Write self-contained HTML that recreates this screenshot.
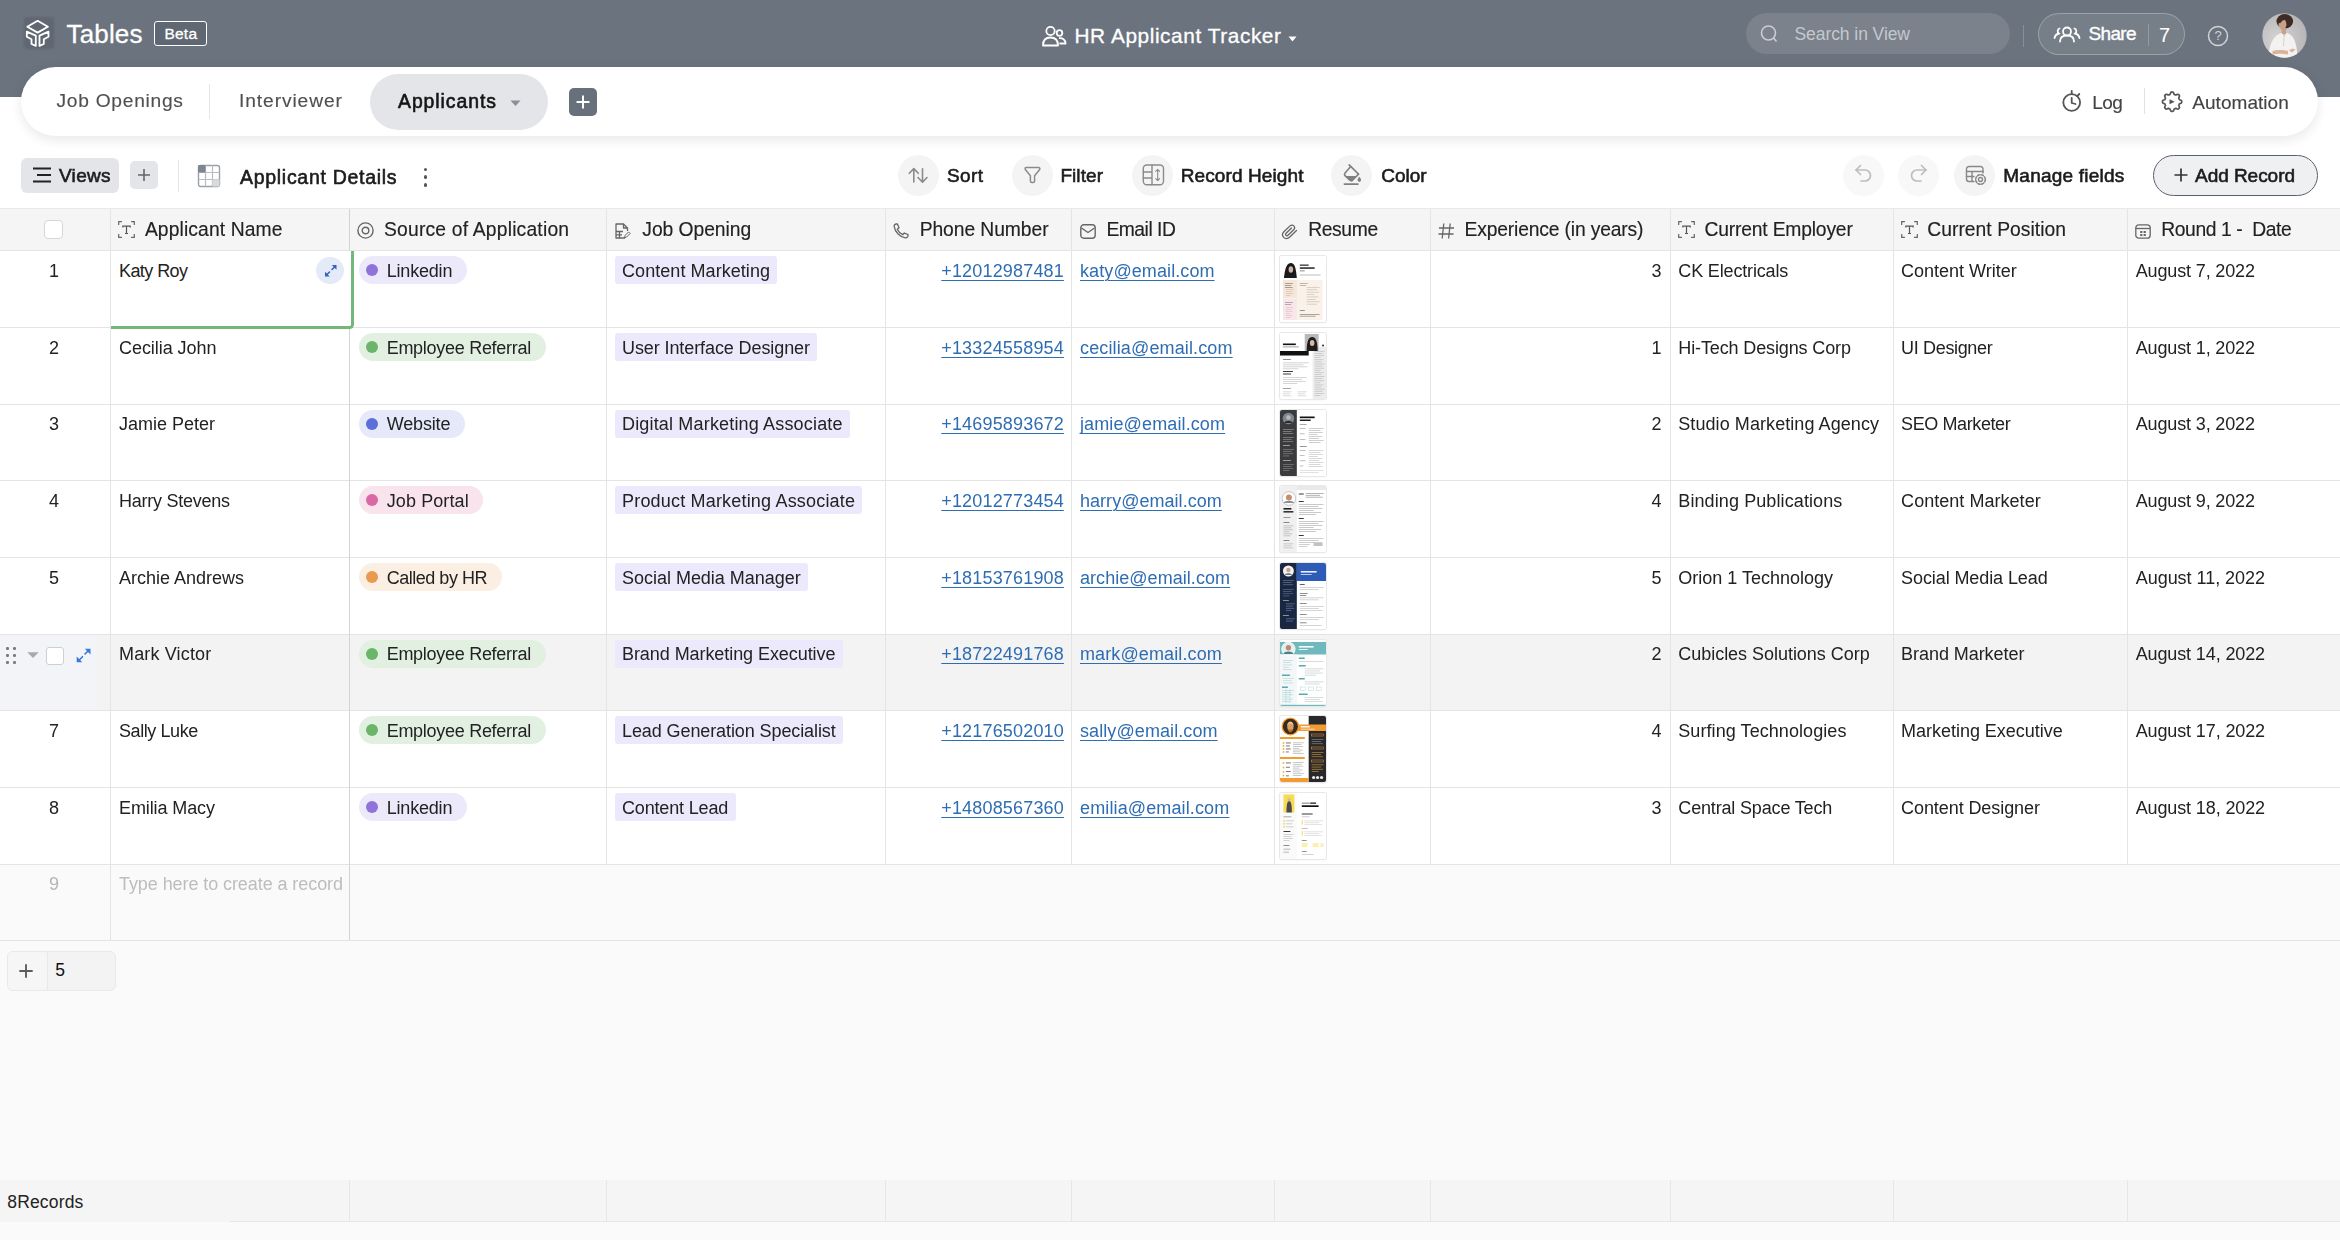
<!DOCTYPE html>
<html lang="en"><head><meta charset="utf-8"><title>HR Applicant Tracker - Tables</title>
<style>
html,body{margin:0;padding:0;}
body{width:2340px;height:1240px;overflow:hidden;position:relative;background:#fff;font-family:"Liberation Sans",sans-serif;}
.b{position:absolute;box-sizing:border-box;}
.t{position:absolute;white-space:pre;}
#root{position:absolute;left:0;top:0;width:2340px;height:1240px;opacity:0.999;}
</style></head><body><div id="root">
<div class="b" style="left:0px;top:0px;width:2340px;height:97px;background:#6b737e;"></div>
<div class="b" style="left:21px;top:67px;width:2297px;height:69px;background:#fff;border-radius:35px;box-shadow:0 4px 14px rgba(0,0,0,0.10);"></div>
<div class="b" style="left:24px;top:16.5px;width:29.5px;height:32px;background:#5f6773;border-radius:4px;filter:blur(1.2px);"></div>
<svg class="b" style="left:22px;top:16px;" width="34" height="34" viewBox="0 0 34 34" fill="none"><g stroke="#fff" stroke-width="1.800" stroke-linejoin="round"><path d="M15.600 4.800 L25.900 10.700 L15.600 16.600 L5.300 10.700 Z"/><path d="M4.800 15.600 L4.800 20.800 L9.500 23.200 L9.500 28 L13.800 29.900 L13.800 19.600 Z"/><path d="M26.500 15.600 L26.500 20.800 L21.800 23.200 L21.800 28 L17.500 29.900 L17.500 19.600 Z"/></g></svg>
<span class="t" style="top:20.99px;font-size:26px;line-height:26px;color:#fff;letter-spacing:0.169px;left:66.50px;-webkit-text-stroke:0.3px #fff;">Tables</span>
<div class="b" style="left:154px;top:21px;width:53px;height:25px;border-radius:3px;border:1.5px solid #fff;background:#5f6773;"></div>
<span class="t" style="top:25.88px;font-size:15.5px;line-height:15.5px;color:#fff;letter-spacing:0.205px;left:164.50px;-webkit-text-stroke:0.3px #fff;">Beta</span>
<svg class="b" style="left:1042px;top:25px;" width="25" height="22" viewBox="0 0 25 22" fill="none"><g stroke="#fff" stroke-width="1.8"><circle cx="8.5" cy="6" r="4.2"/><path d="M1 20.5 C1 15 4 12.5 8.5 12.5 C13 12.5 16 15 16 20.5 Z" stroke-linejoin="round"/><circle cx="17.5" cy="8" r="2.8"/><path d="M17 13.2 C20.5 12.8 23.5 14.5 23.5 18.5 L17.5 18.5"/></g></svg>
<span class="t" style="top:26.19px;font-size:20.8px;line-height:20.8px;color:#fff;letter-spacing:0.585px;left:1074.50px;-webkit-text-stroke:0.3px #fff;">HR Applicant Tracker</span>
<svg class="b" style="left:1288px;top:36px;" width="9" height="6" viewBox="0 0 9 6" fill="none"><path d="M0.5 0.5 L8.5 0.5 L4.5 5.5 Z" fill="#fff"/></svg>
<div class="b" style="left:1746px;top:13px;width:264px;height:41px;background:rgba(255,255,255,0.11);border-radius:21px;"></div>
<svg class="b" style="left:1760px;top:25px;" width="18" height="18" viewBox="0 0 18 18" fill="none"><g stroke="#c9ced4" stroke-width="1.6"><circle cx="8.5" cy="8" r="7"/><path d="M13.5 13 L16.5 16.5"/></g></svg>
<span class="t" style="top:25.69px;font-size:17.5px;line-height:17.5px;color:#c3c8ce;letter-spacing:-0.070px;left:1794.50px;">Search in View</span>
<div class="b" style="left:2023px;top:25px;width:1px;height:22px;background:rgba(255,255,255,0.2);"></div>
<div class="b" style="left:2038px;top:13px;width:147px;height:42px;background:rgba(255,255,255,0.08);border-radius:21px;border:1px solid rgba(255,255,255,0.28);"></div>
<svg class="b" style="left:2053px;top:24px;" width="28" height="20" viewBox="0 0 28 20" fill="none"><g stroke="#fff" stroke-width="1.8" stroke-linecap="round"><circle cx="14" cy="7.5" r="4"/><path d="M7 17.5 C7 13 10 11.5 14 11.5 C18 11.5 21 13 21 17.5"/><path d="M6.5 4.5 C4.5 5 4 8 5.8 9.5 C3.5 10 2 11.5 1.5 14"/><path d="M21.5 4.5 C23.5 5 24 8 22.2 9.5 C24.5 10 26 11.5 26.5 14"/></g></svg>
<span class="t" style="top:24.42px;font-size:19px;line-height:19px;color:#fff;letter-spacing:-0.675px;left:2088.50px;-webkit-text-stroke:0.35px #fff;">Share</span>
<div class="b" style="left:2148px;top:24px;width:1px;height:22px;background:rgba(255,255,255,0.22);"></div>
<span class="t" style="top:24.57px;font-size:20px;line-height:20px;color:#fff;letter-spacing:0.000px;left:2159.00px;">7</span>
<svg class="b" style="left:2207px;top:25px;" width="22" height="22" viewBox="0 0 22 22" fill="none"><circle cx="11" cy="11" r="9.5" stroke="#cfd3d8" stroke-width="1.5"/></svg>
<span class="t" style="top:29.20px;font-size:13px;line-height:13px;color:#cfd3d8;letter-spacing:0.000px;left:2214.40px;">?</span>
<svg class="b" style="left:2262px;top:12.5px;filter:blur(0.5px)" width="45" height="45" viewBox="0 0 45 45"><defs><clipPath id="av"><circle cx="22.5" cy="22.5" r="22.2"/></clipPath><radialGradient id="avg" cx="0.35" cy="0.6" r="0.75"><stop offset="0" stop-color="#d6d5d5"/><stop offset="1" stop-color="#b3b1b1"/></radialGradient></defs><g clip-path="url(#av)"><rect width="45" height="45" fill="url(#avg)"/><ellipse cx="22.800" cy="8.300" rx="8.300" ry="7.300" fill="#3d2b24"/><ellipse cx="20.500" cy="11.300" rx="3.900" ry="5.200" fill="#c9a18b"/><path d="M15.500 8.500 C17 3.500 24 2.500 27.500 5.500 C24 6 20 7 18.500 10 C17.500 10.500 16.500 10 15.500 8.500 Z" fill="#3d2b24"/><rect x="19.500" y="15" width="4.500" height="6" fill="#c9a18b"/><path d="M6.500 45 C7 29 13 21.500 20 20 L22 24.500 L24.500 20 C31 21.500 35 28 35.500 45 Z" fill="#f4f2f1"/><path d="M21.900 24.500 L21.500 33" stroke="#cfc8c4" stroke-width="0.800"/><path d="M10.500 38 C15 36.500 22 36.800 26 38 L26 41.500 C21 40.500 15 40.500 10.500 41.500 Z" fill="#d9b39c"/><path d="M27 37.500 C29 35.500 32 35.500 33.500 36.500 L30 39.500 Z" fill="#d9b39c"/></g></svg>
<span class="t" style="top:90.75px;font-size:19.2px;line-height:19.2px;color:#505050;letter-spacing:0.729px;left:56.50px;-webkit-text-stroke:0.15px #505050;">Job Openings</span>
<div class="b" style="left:208.5px;top:84px;width:1px;height:35px;background:#e6e6e6;"></div>
<span class="t" style="top:90.75px;font-size:19.2px;line-height:19.2px;color:#505050;letter-spacing:0.910px;left:239.00px;-webkit-text-stroke:0.15px #505050;">Interviewer</span>
<div class="b" style="left:370px;top:74px;width:178px;height:56px;background:#e3e5e9;border-radius:28px;"></div>
<span class="t" style="top:92.08px;font-size:19.4px;line-height:19.4px;color:#151515;letter-spacing:0.944px;left:398.00px;-webkit-text-stroke:0.6px #151515;">Applicants</span>
<svg class="b" style="left:510px;top:100px;" width="12" height="7" viewBox="0 0 12 7" fill="none"><path d="M0.5 0.5 L10.5 0.5 L5.5 6 Z" fill="#8a8f97"/></svg>
<div class="b" style="left:569px;top:88px;width:28px;height:28px;background:#68707c;border-radius:5px;"></div>
<svg class="b" style="left:575px;top:94px;" width="16" height="16" viewBox="0 0 16 16" fill="none"><path d="M8 1.5 V14.5 M1.5 8 H14.5" stroke="#fff" stroke-width="2"/></svg>
<svg class="b" style="left:2061px;top:89px;" width="22" height="24" viewBox="0 0 22 24" fill="none"><g stroke="#555" stroke-width="1.800" stroke-linecap="round" stroke-linejoin="round"><circle cx="10.700" cy="13.500" r="8.400"/><path d="M10.700 9 V14 L14.500 15"/><path d="M10.700 1.800 V4.800 M18.300 5 L16.800 6.500"/></g></svg>
<span class="t" style="top:92.72px;font-size:19px;line-height:19px;color:#444;letter-spacing:-0.601px;left:2092.30px;-webkit-text-stroke:0.15px #444;">Log</span>
<div class="b" style="left:2144px;top:88px;width:1px;height:26px;background:#e2e2e2;"></div>
<svg class="b" style="left:2161px;top:90px;" width="22" height="24" viewBox="0 0 22 24" fill="none"><g stroke="#555" stroke-width="1.700" stroke-linejoin="round"><path d="M11.10 2.10 L11.73 2.12 L12.33 2.39 L12.77 3.31 L13.10 4.25 L13.51 4.60 L13.97 4.77 L14.42 4.97 L14.95 5.02 L15.85 4.59 L16.82 4.25 L17.43 4.48 L17.89 4.91 L18.32 5.37 L18.55 5.98 L18.21 6.95 L17.78 7.84 L17.83 8.38 L18.03 8.83 L18.20 9.29 L18.55 9.70 L19.49 10.03 L20.41 10.47 L20.68 11.07 L20.70 11.70 L20.68 12.33 L20.41 12.93 L19.49 13.37 L18.55 13.70 L18.20 14.11 L18.03 14.57 L17.83 15.02 L17.78 15.55 L18.21 16.45 L18.55 17.42 L18.32 18.03 L17.89 18.49 L17.43 18.92 L16.82 19.15 L15.85 18.81 L14.95 18.38 L14.42 18.43 L13.97 18.63 L13.51 18.80 L13.10 19.15 L12.77 20.09 L12.33 21.01 L11.73 21.28 L11.10 21.30 L10.47 21.28 L9.87 21.01 L9.43 20.09 L9.10 19.15 L8.69 18.80 L8.23 18.63 L7.78 18.43 L7.25 18.38 L6.35 18.81 L5.38 19.15 L4.77 18.92 L4.31 18.49 L3.88 18.03 L3.65 17.42 L3.99 16.45 L4.42 15.56 L4.37 15.02 L4.17 14.57 L4.00 14.11 L3.65 13.70 L2.71 13.37 L1.79 12.93 L1.52 12.33 L1.50 11.70 L1.52 11.07 L1.79 10.47 L2.71 10.03 L3.65 9.70 L4.00 9.29 L4.17 8.83 L4.37 8.38 L4.42 7.84 L3.99 6.95 L3.65 5.98 L3.88 5.37 L4.31 4.91 L4.77 4.48 L5.38 4.25 L6.35 4.59 L7.24 5.02 L7.78 4.97 L8.23 4.77 L8.69 4.60 L9.10 4.25 L9.43 3.31 L9.87 2.39 L10.47 2.12 Z"/></g><path d="M8.500 9.200 L13.700 11.700 L8.500 14.200 Z" fill="#555"/></svg>
<span class="t" style="top:92.72px;font-size:19px;line-height:19px;color:#444;letter-spacing:0.043px;left:2192.30px;-webkit-text-stroke:0.15px #444;">Automation</span>
<div class="b" style="left:21px;top:158px;width:98px;height:35px;background:#e3e5e9;border-radius:6px;"></div>
<svg class="b" style="left:32px;top:167px;" width="20" height="16" viewBox="0 0 20 16" fill="none"><path d="M1 1.5 H19 M5 8 H19 M1 14.5 H19" stroke="#222" stroke-width="2.2"/></svg>
<span class="t" style="top:166.32px;font-size:19px;line-height:19px;color:#1c1c1c;letter-spacing:0.290px;left:59.00px;-webkit-text-stroke:0.6px #1c1c1c;">Views</span>
<div class="b" style="left:130px;top:161px;width:28px;height:28px;background:#e3e5e9;border-radius:5px;"></div>
<svg class="b" style="left:137px;top:168px;" width="14" height="14" viewBox="0 0 14 14" fill="none"><path d="M7 1 V13 M1 7 H13" stroke="#666" stroke-width="1.6"/></svg>
<div class="b" style="left:178px;top:160px;width:1px;height:32px;background:#e6e6e6;"></div>
<svg class="b" style="left:197px;top:164px;" width="24" height="24" viewBox="0 0 24 24" fill="none"><rect x="1.5" y="1.5" width="21" height="21" rx="2" stroke="#9aa0a8" stroke-width="1.4"/><path d="M8.5 1.5 V22.5 M15.5 1.5 V22.5 M1.5 8.5 H22.5 M1.5 15.5 H22.5" stroke="#b9bdc3" stroke-width="1.2"/><rect x="1" y="1" width="7.5" height="7.5" rx="1" fill="#7f8590"/><rect x="15.5" y="15.5" width="7" height="7" fill="#d9dbdf"/></svg>
<span class="t" style="top:168.09px;font-size:19.5px;line-height:19.5px;color:#1c1c1c;letter-spacing:0.704px;left:240.00px;-webkit-text-stroke:0.6px #1c1c1c;">Applicant Details</span>
<div class="b" style="left:423.8px;top:167.7px;width:3.6px;height:3.6px;background:#555;border-radius:2px;"></div>
<div class="b" style="left:423.8px;top:175.39999999999998px;width:3.6px;height:3.6px;background:#555;border-radius:2px;"></div>
<div class="b" style="left:423.8px;top:183.2px;width:3.6px;height:3.6px;background:#555;border-radius:2px;"></div>
<div class="b" style="left:897.9px;top:154.5px;width:41px;height:41px;background:#f4f4f4;border-radius:21px;"></div>
<svg class="b" style="left:907px;top:166px;" width="23" height="19" viewBox="0 0 23 19" fill="none"><g stroke="#8b8b8b" stroke-width="1.6" stroke-linecap="round" stroke-linejoin="round"><path d="M6.8 16 V2.800 M2.300 7.300 L6.800 2.600 L11.300 7.300"/><path d="M15.500 2.800 V16 M11 11.500 L15.500 16.200 L20 11.500"/></g></svg>
<span class="t" style="top:166.32px;font-size:19px;line-height:19px;color:#1c1c1c;letter-spacing:0.385px;left:947.00px;-webkit-text-stroke:0.6px #1c1c1c;">Sort</span>
<div class="b" style="left:1011.9000000000001px;top:154.5px;width:41px;height:41px;background:#f4f4f4;border-radius:21px;"></div>
<svg class="b" style="left:1023px;top:166px;" width="19" height="19" viewBox="0 0 19 19" fill="none"><path d="M3 1.500 H15.500 C16.800 1.500 17.300 2.800 16.500 3.800 L11.600 9.800 V15 C11.600 16 11 16.500 10 16.500 H9 C8 16.500 7.400 16 7.400 15 V9.800 L2.500 3.800 C1.700 2.800 2.200 1.500 3 1.500 Z" stroke="#8b8b8b" stroke-width="1.5" stroke-linejoin="round"/></svg>
<span class="t" style="top:166.32px;font-size:19px;line-height:19px;color:#1c1c1c;letter-spacing:0.076px;left:1060.40px;-webkit-text-stroke:0.6px #1c1c1c;">Filter</span>
<div class="b" style="left:1131.8px;top:154.5px;width:41px;height:41px;background:#f4f4f4;border-radius:21px;"></div>
<svg class="b" style="left:1142px;top:164px;" width="23" height="22" viewBox="0 0 23 22" fill="none"><g stroke="#8b8b8b" stroke-width="1.4" stroke-linecap="round" stroke-linejoin="round"><rect x="1.300" y="1" width="20.200" height="19.800" rx="3.500"/><path d="M10 1 V20.800 M1.300 8 H10 M1.300 14 H10"/><path d="M15.700 5.500 V16.500 M13.800 7.400 L15.700 5.300 L17.600 7.400 M13.800 14.600 L15.700 16.700 L17.600 14.600" stroke-width="1.100"/></g></svg>
<span class="t" style="top:166.32px;font-size:19px;line-height:19px;color:#1c1c1c;letter-spacing:0.112px;left:1180.70px;-webkit-text-stroke:0.6px #1c1c1c;">Record Height</span>
<div class="b" style="left:1331.0px;top:154.5px;width:41px;height:41px;background:#f4f4f4;border-radius:21px;"></div>
<svg class="b" style="left:1342px;top:164px;" width="21" height="22" viewBox="0 0 21 22" fill="none"><g stroke="#808080" stroke-width="1.6" stroke-linejoin="round" stroke-linecap="round"><path d="M7.200 0.900 L16.500 10.100"/><path d="M8.500 2.700 L3 9 C2.200 10 2.200 10.800 3 11.600 L7.800 16.200 C8.800 17 9.800 17 10.600 16.200 L16.500 10.100"/><path d="M2.300 20.100 H16"/></g><path d="M3.600 12.100 H14.600 L10.600 16.200 C9.800 17 8.800 17 7.800 16.200 Z" fill="#808080"/><path d="M17.300 12.800 C18.600 14.500 19.100 15.300 19.100 16.100 A1.800 1.800 0 0 1 15.500 16.100 C15.500 15.300 16 14.500 17.300 12.800 Z" fill="#808080"/></svg>
<span class="t" style="top:166.32px;font-size:19px;line-height:19px;color:#1c1c1c;letter-spacing:-0.001px;left:1381.30px;-webkit-text-stroke:0.6px #1c1c1c;">Color</span>
<div class="b" style="left:1842.5px;top:154.5px;width:41px;height:41px;background:#f8f8f8;border-radius:21px;"></div>
<svg class="b" style="left:1854px;top:164px;" width="19" height="19" viewBox="0 0 19 19" fill="none"><g stroke="#bdbdbd" stroke-width="1.7" stroke-linecap="round" stroke-linejoin="round"><path d="M6.5 1.5 L2 6 L6.5 10.5"/><path d="M2 6 H11 A5.5 5.5 0 0 1 11 17 H7"/></g></svg>
<div class="b" style="left:1898.3px;top:154.5px;width:41px;height:41px;background:#f8f8f8;border-radius:21px;"></div>
<svg class="b" style="left:1909px;top:164px;" width="19" height="19" viewBox="0 0 19 19" fill="none"><g stroke="#bdbdbd" stroke-width="1.7" stroke-linecap="round" stroke-linejoin="round"><path d="M12.5 1.5 L17 6 L12.5 10.5"/><path d="M17 6 H8 A5.5 5.5 0 0 0 8 17 H12"/></g></svg>
<div class="b" style="left:1954.1px;top:154.5px;width:41px;height:41px;background:#f4f4f4;border-radius:21px;"></div>
<svg class="b" style="left:1965px;top:165px;" width="22" height="21" viewBox="0 0 22 21" fill="none"><g stroke="#888" stroke-width="1.4" stroke-linecap="round"><path d="M18 8 V4 A2.5 2.5 0 0 0 15.5 1.5 H4 A2.5 2.5 0 0 0 1.500 4 V14 A2.5 2.5 0 0 0 4 16.500 H9"/><path d="M1.5 6.500 H18 M1.5 11.500 H9 M7 6.500 V16.500"/><circle cx="15.500" cy="14.500" r="2"/><circle cx="15.500" cy="14.500" r="4.8" stroke-width="1.6" stroke-dasharray="2.2 1.6"/></g></svg>
<span class="t" style="top:165.92px;font-size:19px;line-height:19px;color:#1c1c1c;letter-spacing:0.225px;left:2003.30px;-webkit-text-stroke:0.6px #1c1c1c;">Manage fields</span>
<div class="b" style="left:2153px;top:154.5px;width:165px;height:41px;background:#eef0f2;border-radius:21px;border:1.5px solid #5b6068;"></div>
<svg class="b" style="left:2174px;top:168px;" width="14" height="14" viewBox="0 0 14 14" fill="none"><path d="M7 0.500 V13.500 M0.500 7 H13.500" stroke="#333" stroke-width="1.7"/></svg>
<span class="t" style="top:165.92px;font-size:19px;line-height:19px;color:#1c1c1c;letter-spacing:-0.037px;left:2195.00px;-webkit-text-stroke:0.6px #1c1c1c;">Add Record</span>
<div class="b" style="left:0px;top:941px;width:2340px;height:299px;background:#fafafa;"></div>
<div class="b" style="left:0px;top:208px;width:2340px;height:43px;background:#f5f5f5;border-top:1px solid #e9e9e9;"></div>
<div class="b" style="left:0px;top:865px;width:2340px;height:75px;background:#fafafa;"></div>
<div class="b" style="left:0px;top:635px;width:2340px;height:75px;background:#f3f3f3;"></div>
<div class="b" style="left:0px;top:635px;width:96px;height:75px;background:#f3f4f8;"></div>
<div class="b" style="left:0px;top:250px;width:2340px;height:1px;background:#e4e4e4;"></div>
<div class="b" style="left:0px;top:327px;width:2340px;height:1px;background:#e4e4e4;"></div>
<div class="b" style="left:0px;top:404px;width:2340px;height:1px;background:#e4e4e4;"></div>
<div class="b" style="left:0px;top:480px;width:2340px;height:1px;background:#e4e4e4;"></div>
<div class="b" style="left:0px;top:557px;width:2340px;height:1px;background:#e4e4e4;"></div>
<div class="b" style="left:0px;top:634px;width:2340px;height:1px;background:#e4e4e4;"></div>
<div class="b" style="left:0px;top:710px;width:2340px;height:1px;background:#e4e4e4;"></div>
<div class="b" style="left:0px;top:787px;width:2340px;height:1px;background:#e4e4e4;"></div>
<div class="b" style="left:0px;top:864px;width:2340px;height:1px;background:#e4e4e4;"></div>
<div class="b" style="left:0px;top:940px;width:2340px;height:1px;background:#e4e4e4;"></div>
<div class="b" style="left:110px;top:209px;width:1px;height:731px;background:#e4e4e4;"></div>
<div class="b" style="left:349px;top:209px;width:1px;height:731px;background:#d4d4d4;"></div>
<div class="b" style="left:606px;top:209px;width:1px;height:655px;background:#e4e4e4;"></div>
<div class="b" style="left:885px;top:209px;width:1px;height:655px;background:#e4e4e4;"></div>
<div class="b" style="left:1071px;top:209px;width:1px;height:655px;background:#e4e4e4;"></div>
<div class="b" style="left:1274px;top:209px;width:1px;height:655px;background:#e4e4e4;"></div>
<div class="b" style="left:1430px;top:209px;width:1px;height:655px;background:#e4e4e4;"></div>
<div class="b" style="left:1670px;top:209px;width:1px;height:655px;background:#e4e4e4;"></div>
<div class="b" style="left:1893px;top:209px;width:1px;height:655px;background:#e4e4e4;"></div>
<div class="b" style="left:2127px;top:209px;width:1px;height:655px;background:#e4e4e4;"></div>
<div class="b" style="left:0px;top:1180px;width:2340px;height:42px;background:#f5f5f5;"></div>
<div class="b" style="left:349px;top:1180px;width:1px;height:42px;background:#e6e6e6;"></div>
<div class="b" style="left:606px;top:1180px;width:1px;height:42px;background:#e6e6e6;"></div>
<div class="b" style="left:885px;top:1180px;width:1px;height:42px;background:#e6e6e6;"></div>
<div class="b" style="left:1071px;top:1180px;width:1px;height:42px;background:#e6e6e6;"></div>
<div class="b" style="left:1274px;top:1180px;width:1px;height:42px;background:#e6e6e6;"></div>
<div class="b" style="left:1430px;top:1180px;width:1px;height:42px;background:#e6e6e6;"></div>
<div class="b" style="left:1670px;top:1180px;width:1px;height:42px;background:#e6e6e6;"></div>
<div class="b" style="left:1893px;top:1180px;width:1px;height:42px;background:#e6e6e6;"></div>
<div class="b" style="left:2127px;top:1180px;width:1px;height:42px;background:#e6e6e6;"></div>
<div class="b" style="left:230px;top:1221px;width:2110px;height:1px;background:#e6e6e6;"></div>
<span class="t" style="top:1193.69px;font-size:17.5px;line-height:17.5px;color:#222;letter-spacing:0.158px;left:7.30px;">8Records</span>
<div class="b" style="left:44px;top:220px;width:19px;height:19px;background:#fff;border-radius:4px;border:1.5px solid #d6d6d6;"></div>
<svg class="b" style="left:117.7px;top:221.3px;" width="17" height="17" viewBox="0 0 17 17" fill="none"><g stroke="#666" stroke-width="1.2"><path d="M0.700 3.900 V0.700 H3.900 M13.100 0.700 H16.300 V3.900 M0.700 13.100 V16.300 H3.900 M13.100 16.300 H16.300 V13.100"/><path d="M4.800 6.400 V5.100 H12.200 V6.400 M8.500 5.100 V12.500 M7 12.500 H10" stroke="#555" stroke-width="1.200"/></g></svg>
<span class="t" style="top:220.06px;font-size:19.3px;line-height:19.3px;color:#222;letter-spacing:0.112px;left:144.90px;-webkit-text-stroke:0.15px #222;">Applicant Name</span>
<svg class="b" style="left:356.5px;top:222px;" width="17" height="17" viewBox="0 0 17 17" fill="none"><circle cx="8.5" cy="8.5" r="7.6" stroke="#666" stroke-width="1.4"/><circle cx="8.5" cy="8.5" r="3.3" stroke="#666" stroke-width="1.4"/></svg>
<span class="t" style="top:220.06px;font-size:19.3px;line-height:19.3px;color:#222;letter-spacing:0.194px;left:384.00px;-webkit-text-stroke:0.15px #222;">Source of Application</span>
<svg class="b" style="left:614.5px;top:223px;" width="16" height="16" viewBox="0 0 16 16" fill="none"><g stroke="#666" stroke-width="1.3" stroke-linejoin="round"><path d="M10 15 H1 V1 H8.500 L12.500 5 V8"/><path d="M8.500 1 V5 H12.500"/><path d="M1 8.500 H8 M4.500 8.500 V15 M1 11.800 H7"/><path d="M9.500 14.800 L10.200 12.300 L13.600 8.900 L15.200 10.500 L11.800 13.900 Z" stroke-width="1"/></g></svg>
<span class="t" style="top:220.06px;font-size:19.3px;line-height:19.3px;color:#222;letter-spacing:-0.045px;left:642.30px;-webkit-text-stroke:0.15px #222;">Job Opening</span>
<svg class="b" style="left:892.5px;top:223px;" width="16" height="16" viewBox="0 0 16 16" fill="none"><path d="M3.200 1 C2 1 1 2.200 1.200 3.600 C2 9 7 14 12.400 14.800 C13.800 15 15 14 15 12.800 V11.600 L11.300 10 L9.800 11.700 C7.600 10.700 5.300 8.400 4.300 6.200 L6 4.700 L4.400 1 Z" stroke="#666" stroke-width="1.3" stroke-linejoin="round"/></svg>
<span class="t" style="top:220.06px;font-size:19.3px;line-height:19.3px;color:#222;letter-spacing:-0.074px;left:919.70px;-webkit-text-stroke:0.15px #222;">Phone Number</span>
<svg class="b" style="left:1080px;top:223.5px;" width="16" height="15" viewBox="0 0 16 15" fill="none"><g stroke="#666" stroke-width="1.4" stroke-linejoin="round"><rect x="0.8" y="0.8" width="14.4" height="13.4" rx="3"/><path d="M1.500 4 L8 8.500 L14.500 4"/></g></svg>
<span class="t" style="top:220.06px;font-size:19.3px;line-height:19.3px;color:#222;letter-spacing:-0.475px;left:1106.40px;-webkit-text-stroke:0.15px #222;">Email ID</span>
<svg class="b" style="left:1281px;top:224px;" width="18" height="16" viewBox="0 0 18 16" fill="none"><path d="M15.500 6.500 L8.500 13.300 C6.800 15 4.200 15 2.700 13.400 C1.200 11.800 1.300 9.400 2.900 7.800 L9 1.900 C10.100 0.800 11.800 0.800 12.800 1.900 C13.800 3 13.800 4.600 12.700 5.700 L7 11.300 C6.400 11.900 5.500 11.900 5 11.300 C4.500 10.700 4.500 9.900 5.100 9.300 L10.500 4" stroke="#666" stroke-width="1.3" stroke-linecap="round"/></svg>
<span class="t" style="top:220.06px;font-size:19.3px;line-height:19.3px;color:#222;letter-spacing:-0.373px;left:1308.20px;-webkit-text-stroke:0.15px #222;">Resume</span>
<svg class="b" style="left:1437.5px;top:223px;" width="17" height="16" viewBox="0 0 17 16" fill="none"><path d="M5.800 0.500 L4.200 15.500 M12.200 0.500 L10.600 15.500 M1 5 H16 M0.500 11 H15.500" stroke="#666" stroke-width="1.3"/></svg>
<span class="t" style="top:220.06px;font-size:19.3px;line-height:19.3px;color:#222;letter-spacing:-0.168px;left:1464.60px;-webkit-text-stroke:0.15px #222;">Experience (in years)</span>
<svg class="b" style="left:1677.8px;top:221.3px;" width="17" height="17" viewBox="0 0 17 17" fill="none"><g stroke="#666" stroke-width="1.2"><path d="M0.700 3.900 V0.700 H3.900 M13.100 0.700 H16.300 V3.900 M0.700 13.100 V16.300 H3.900 M13.100 16.300 H16.300 V13.100"/><path d="M4.800 6.400 V5.100 H12.200 V6.400 M8.500 5.100 V12.500 M7 12.500 H10" stroke="#555" stroke-width="1.200"/></g></svg>
<span class="t" style="top:220.06px;font-size:19.3px;line-height:19.3px;color:#222;letter-spacing:-0.176px;left:1704.40px;-webkit-text-stroke:0.15px #222;">Current Employer</span>
<svg class="b" style="left:1900.6px;top:221.3px;" width="17" height="17" viewBox="0 0 17 17" fill="none"><g stroke="#666" stroke-width="1.2"><path d="M0.700 3.900 V0.700 H3.900 M13.100 0.700 H16.300 V3.900 M0.700 13.100 V16.300 H3.900 M13.100 16.300 H16.300 V13.100"/><path d="M4.800 6.400 V5.100 H12.200 V6.400 M8.500 5.100 V12.500 M7 12.500 H10" stroke="#555" stroke-width="1.200"/></g></svg>
<span class="t" style="top:220.06px;font-size:19.3px;line-height:19.3px;color:#222;letter-spacing:0.041px;left:1927.20px;-webkit-text-stroke:0.15px #222;">Current Position</span>
<svg class="b" style="left:2134.5px;top:223.5px;" width="16" height="15" viewBox="0 0 16 15" fill="none"><g stroke="#666" stroke-width="1.3"><rect x="0.800" y="0.800" width="14.400" height="13.400" rx="3"/><path d="M0.800 4.500 H15.200"/></g><g fill="#666"><rect x="5.200" y="7" width="2.200" height="2"/><rect x="8.600" y="7" width="2.200" height="2"/><rect x="5.200" y="10" width="2.200" height="2"/><rect x="8.600" y="10" width="2.200" height="2"/></g></svg>
<span class="t" style="top:220.06px;font-size:19.3px;line-height:19.3px;color:#222;letter-spacing:-0.411px;left:2161.30px;-webkit-text-stroke:0.15px #222;">Round 1 -  Date</span>
<span class="t" style="top:261.91px;font-size:18px;line-height:18px;color:#222;letter-spacing:0.100px;left:48.94px;">1</span>
<span class="t" style="top:261.91px;font-size:18px;line-height:18px;color:#222;letter-spacing:-0.576px;left:119.00px;">Katy Roy</span>
<div class="b" style="left:358.7px;top:256px;width:108.25px;height:27.5px;background:#ece9fb;border-radius:14px;"></div>
<div class="b" style="left:366px;top:263.8px;width:12px;height:12px;background:#8f73db;border-radius:6px;"></div>
<span class="t" style="top:261.91px;font-size:18px;line-height:18px;color:#222;letter-spacing:-0.186px;left:386.70px;">Linkedin</span>
<div class="b" style="left:615px;top:256px;width:162.3px;height:27.5px;background:#ebe9fb;border-radius:3px;"></div>
<span class="t" style="top:261.91px;font-size:18px;line-height:18px;color:#222;letter-spacing:0.058px;left:622.00px;">Content Marketing</span>
<span class="t" style="top:261.91px;font-size:18px;line-height:18px;color:#2f6db3;letter-spacing:0.170px;left:941.25px;text-decoration:underline;text-underline-offset:2.5px;text-decoration-thickness:1.2px;">+12012987481</span>
<span class="t" style="top:261.91px;font-size:18px;line-height:18px;color:#2f6db3;letter-spacing:0.092px;left:1080.00px;text-decoration:underline;text-underline-offset:2.5px;text-decoration-thickness:1.2px;">katy@email.com</span>
<span class="t" style="top:261.91px;font-size:18px;line-height:18px;color:#222;letter-spacing:0.000px;left:1651.49px;">3</span>
<span class="t" style="top:261.91px;font-size:18px;line-height:18px;color:#222;letter-spacing:-0.156px;left:1678.30px;">CK Electricals</span>
<span class="t" style="top:261.91px;font-size:18px;line-height:18px;color:#222;letter-spacing:-0.008px;left:1901.10px;">Content Writer</span>
<span class="t" style="top:261.91px;font-size:18px;line-height:18px;color:#222;letter-spacing:-0.138px;left:2135.70px;">August 7, 2022</span>
<span class="t" style="top:338.58px;font-size:18px;line-height:18px;color:#222;letter-spacing:0.100px;left:48.94px;">2</span>
<span class="t" style="top:338.58px;font-size:18px;line-height:18px;color:#222;letter-spacing:-0.050px;left:119.00px;">Cecilia John</span>
<div class="b" style="left:358.7px;top:333px;width:187.0px;height:27.5px;background:#e2f0e2;border-radius:14px;"></div>
<div class="b" style="left:366px;top:340.8px;width:12px;height:12px;background:#6bb56b;border-radius:6px;"></div>
<span class="t" style="top:338.58px;font-size:18px;line-height:18px;color:#222;letter-spacing:-0.285px;left:386.70px;">Employee Referral</span>
<div class="b" style="left:615px;top:333px;width:202.3px;height:27.5px;background:#ebe9fb;border-radius:3px;"></div>
<span class="t" style="top:338.58px;font-size:18px;line-height:18px;color:#222;letter-spacing:-0.095px;left:622.00px;">User Interface Designer</span>
<span class="t" style="top:338.58px;font-size:18px;line-height:18px;color:#2f6db3;letter-spacing:0.170px;left:941.25px;text-decoration:underline;text-underline-offset:2.5px;text-decoration-thickness:1.2px;">+13324558954</span>
<span class="t" style="top:338.58px;font-size:18px;line-height:18px;color:#2f6db3;letter-spacing:0.137px;left:1080.00px;text-decoration:underline;text-underline-offset:2.5px;text-decoration-thickness:1.2px;">cecilia@email.com</span>
<span class="t" style="top:338.58px;font-size:18px;line-height:18px;color:#222;letter-spacing:0.000px;left:1651.49px;">1</span>
<span class="t" style="top:338.58px;font-size:18px;line-height:18px;color:#222;letter-spacing:-0.124px;left:1678.30px;">Hi-Tech Designs Corp</span>
<span class="t" style="top:338.58px;font-size:18px;line-height:18px;color:#222;letter-spacing:-0.344px;left:1901.10px;">UI Designer</span>
<span class="t" style="top:338.58px;font-size:18px;line-height:18px;color:#222;letter-spacing:-0.138px;left:2135.70px;">August 1, 2022</span>
<span class="t" style="top:415.25px;font-size:18px;line-height:18px;color:#222;letter-spacing:0.100px;left:48.94px;">3</span>
<span class="t" style="top:415.25px;font-size:18px;line-height:18px;color:#222;letter-spacing:-0.004px;left:119.00px;">Jamie Peter</span>
<div class="b" style="left:358.7px;top:410px;width:106.25px;height:27.5px;background:#e6e9fa;border-radius:14px;"></div>
<div class="b" style="left:366px;top:417.8px;width:12px;height:12px;background:#5b6fd8;border-radius:6px;"></div>
<span class="t" style="top:415.25px;font-size:18px;line-height:18px;color:#222;letter-spacing:-0.158px;left:386.70px;">Website</span>
<div class="b" style="left:615px;top:410px;width:234.8px;height:27.5px;background:#ebe9fb;border-radius:3px;"></div>
<span class="t" style="top:415.25px;font-size:18px;line-height:18px;color:#222;letter-spacing:0.169px;left:622.00px;">Digital Marketing Associate</span>
<span class="t" style="top:415.25px;font-size:18px;line-height:18px;color:#2f6db3;letter-spacing:0.170px;left:941.25px;text-decoration:underline;text-underline-offset:2.5px;text-decoration-thickness:1.2px;">+14695893672</span>
<span class="t" style="top:415.25px;font-size:18px;line-height:18px;color:#2f6db3;letter-spacing:0.121px;left:1080.00px;text-decoration:underline;text-underline-offset:2.5px;text-decoration-thickness:1.2px;">jamie@email.com</span>
<span class="t" style="top:415.25px;font-size:18px;line-height:18px;color:#222;letter-spacing:0.000px;left:1651.49px;">2</span>
<span class="t" style="top:415.25px;font-size:18px;line-height:18px;color:#222;letter-spacing:0.072px;left:1678.30px;">Studio Marketing Agency</span>
<span class="t" style="top:415.25px;font-size:18px;line-height:18px;color:#222;letter-spacing:-0.403px;left:1901.10px;">SEO Marketer</span>
<span class="t" style="top:415.25px;font-size:18px;line-height:18px;color:#222;letter-spacing:-0.138px;left:2135.70px;">August 3, 2022</span>
<span class="t" style="top:491.91px;font-size:18px;line-height:18px;color:#222;letter-spacing:0.100px;left:48.94px;">4</span>
<span class="t" style="top:491.91px;font-size:18px;line-height:18px;color:#222;letter-spacing:-0.253px;left:119.00px;">Harry Stevens</span>
<div class="b" style="left:358.7px;top:486px;width:124.5px;height:27.5px;background:#f9e4ee;border-radius:14px;"></div>
<div class="b" style="left:366px;top:493.8px;width:12px;height:12px;background:#d968a5;border-radius:6px;"></div>
<span class="t" style="top:491.91px;font-size:18px;line-height:18px;color:#222;letter-spacing:0.106px;left:386.70px;">Job Portal</span>
<div class="b" style="left:615px;top:486px;width:247.3px;height:27.5px;background:#ebe9fb;border-radius:3px;"></div>
<span class="t" style="top:491.91px;font-size:18px;line-height:18px;color:#222;letter-spacing:0.188px;left:622.00px;">Product Marketing Associate</span>
<span class="t" style="top:491.91px;font-size:18px;line-height:18px;color:#2f6db3;letter-spacing:0.170px;left:941.25px;text-decoration:underline;text-underline-offset:2.5px;text-decoration-thickness:1.2px;">+12012773454</span>
<span class="t" style="top:491.91px;font-size:18px;line-height:18px;color:#2f6db3;letter-spacing:0.032px;left:1080.00px;text-decoration:underline;text-underline-offset:2.5px;text-decoration-thickness:1.2px;">harry@email.com</span>
<span class="t" style="top:491.91px;font-size:18px;line-height:18px;color:#222;letter-spacing:0.000px;left:1651.49px;">4</span>
<span class="t" style="top:491.91px;font-size:18px;line-height:18px;color:#222;letter-spacing:0.100px;left:1678.30px;">Binding Publications</span>
<span class="t" style="top:491.91px;font-size:18px;line-height:18px;color:#222;letter-spacing:0.036px;left:1901.10px;">Content Marketer</span>
<span class="t" style="top:491.91px;font-size:18px;line-height:18px;color:#222;letter-spacing:-0.138px;left:2135.70px;">August 9, 2022</span>
<span class="t" style="top:568.58px;font-size:18px;line-height:18px;color:#222;letter-spacing:0.100px;left:48.94px;">5</span>
<span class="t" style="top:568.58px;font-size:18px;line-height:18px;color:#222;letter-spacing:-0.005px;left:119.00px;">Archie Andrews</span>
<div class="b" style="left:358.7px;top:563px;width:143.25px;height:27.5px;background:#fbeee2;border-radius:14px;"></div>
<div class="b" style="left:366px;top:570.8px;width:12px;height:12px;background:#e99a4d;border-radius:6px;"></div>
<span class="t" style="top:568.58px;font-size:18px;line-height:18px;color:#222;letter-spacing:-0.481px;left:386.70px;">Called by HR</span>
<div class="b" style="left:615px;top:563px;width:193.05px;height:27.5px;background:#ebe9fb;border-radius:3px;"></div>
<span class="t" style="top:568.58px;font-size:18px;line-height:18px;color:#222;letter-spacing:-0.018px;left:622.00px;">Social Media Manager</span>
<span class="t" style="top:568.58px;font-size:18px;line-height:18px;color:#2f6db3;letter-spacing:0.170px;left:941.25px;text-decoration:underline;text-underline-offset:2.5px;text-decoration-thickness:1.2px;">+18153761908</span>
<span class="t" style="top:568.58px;font-size:18px;line-height:18px;color:#2f6db3;letter-spacing:0.046px;left:1080.00px;text-decoration:underline;text-underline-offset:2.5px;text-decoration-thickness:1.2px;">archie@email.com</span>
<span class="t" style="top:568.58px;font-size:18px;line-height:18px;color:#222;letter-spacing:0.000px;left:1651.49px;">5</span>
<span class="t" style="top:568.58px;font-size:18px;line-height:18px;color:#222;letter-spacing:-0.010px;left:1678.30px;">Orion 1 Technology</span>
<span class="t" style="top:568.58px;font-size:18px;line-height:18px;color:#222;letter-spacing:-0.094px;left:1901.10px;">Social Media Lead</span>
<span class="t" style="top:568.58px;font-size:18px;line-height:18px;color:#222;letter-spacing:-0.027px;left:2135.70px;">August 11, 2022</span>
<span class="t" style="top:645.25px;font-size:18px;line-height:18px;color:#222;letter-spacing:0.156px;left:119.00px;">Mark Victor</span>
<div class="b" style="left:358.7px;top:640px;width:187.0px;height:27.5px;background:#e2f0e2;border-radius:14px;"></div>
<div class="b" style="left:366px;top:647.8px;width:12px;height:12px;background:#6bb56b;border-radius:6px;"></div>
<span class="t" style="top:645.25px;font-size:18px;line-height:18px;color:#222;letter-spacing:-0.285px;left:386.70px;">Employee Referral</span>
<div class="b" style="left:615px;top:640px;width:227.8px;height:27.5px;background:#ebe9fb;border-radius:3px;"></div>
<span class="t" style="top:645.25px;font-size:18px;line-height:18px;color:#222;letter-spacing:-0.067px;left:622.00px;">Brand Marketing Executive</span>
<span class="t" style="top:645.25px;font-size:18px;line-height:18px;color:#2f6db3;letter-spacing:0.170px;left:941.25px;text-decoration:underline;text-underline-offset:2.5px;text-decoration-thickness:1.2px;">+18722491768</span>
<span class="t" style="top:645.25px;font-size:18px;line-height:18px;color:#2f6db3;letter-spacing:0.112px;left:1080.00px;text-decoration:underline;text-underline-offset:2.5px;text-decoration-thickness:1.2px;">mark@email.com</span>
<span class="t" style="top:645.25px;font-size:18px;line-height:18px;color:#222;letter-spacing:0.000px;left:1651.49px;">2</span>
<span class="t" style="top:645.25px;font-size:18px;line-height:18px;color:#222;letter-spacing:-0.032px;left:1678.30px;">Cubicles Solutions Corp</span>
<span class="t" style="top:645.25px;font-size:18px;line-height:18px;color:#222;letter-spacing:-0.058px;left:1901.10px;">Brand Marketer</span>
<span class="t" style="top:645.25px;font-size:18px;line-height:18px;color:#222;letter-spacing:-0.122px;left:2135.70px;">August 14, 2022</span>
<span class="t" style="top:721.91px;font-size:18px;line-height:18px;color:#222;letter-spacing:0.100px;left:48.94px;">7</span>
<span class="t" style="top:721.91px;font-size:18px;line-height:18px;color:#222;letter-spacing:-0.422px;left:119.00px;">Sally Luke</span>
<div class="b" style="left:358.7px;top:716px;width:187.0px;height:27.5px;background:#e2f0e2;border-radius:14px;"></div>
<div class="b" style="left:366px;top:723.8px;width:12px;height:12px;background:#6bb56b;border-radius:6px;"></div>
<span class="t" style="top:721.91px;font-size:18px;line-height:18px;color:#222;letter-spacing:-0.285px;left:386.70px;">Employee Referral</span>
<div class="b" style="left:615px;top:716px;width:228.05px;height:27.5px;background:#ebe9fb;border-radius:3px;"></div>
<span class="t" style="top:721.91px;font-size:18px;line-height:18px;color:#222;letter-spacing:-0.096px;left:622.00px;">Lead Generation Specialist</span>
<span class="t" style="top:721.91px;font-size:18px;line-height:18px;color:#2f6db3;letter-spacing:0.170px;left:941.25px;text-decoration:underline;text-underline-offset:2.5px;text-decoration-thickness:1.2px;">+12176502010</span>
<span class="t" style="top:721.91px;font-size:18px;line-height:18px;color:#2f6db3;letter-spacing:0.086px;left:1080.00px;text-decoration:underline;text-underline-offset:2.5px;text-decoration-thickness:1.2px;">sally@email.com</span>
<span class="t" style="top:721.91px;font-size:18px;line-height:18px;color:#222;letter-spacing:0.000px;left:1651.49px;">4</span>
<span class="t" style="top:721.91px;font-size:18px;line-height:18px;color:#222;letter-spacing:0.069px;left:1678.30px;">Surfing Technologies</span>
<span class="t" style="top:721.91px;font-size:18px;line-height:18px;color:#222;letter-spacing:-0.026px;left:1901.10px;">Marketing Executive</span>
<span class="t" style="top:721.91px;font-size:18px;line-height:18px;color:#222;letter-spacing:-0.122px;left:2135.70px;">August 17, 2022</span>
<span class="t" style="top:798.58px;font-size:18px;line-height:18px;color:#222;letter-spacing:0.100px;left:48.94px;">8</span>
<span class="t" style="top:798.58px;font-size:18px;line-height:18px;color:#222;letter-spacing:-0.101px;left:119.00px;">Emilia Macy</span>
<div class="b" style="left:358.7px;top:793px;width:108.25px;height:27.5px;background:#ece9fb;border-radius:14px;"></div>
<div class="b" style="left:366px;top:800.8px;width:12px;height:12px;background:#8f73db;border-radius:6px;"></div>
<span class="t" style="top:798.58px;font-size:18px;line-height:18px;color:#222;letter-spacing:-0.186px;left:386.70px;">Linkedin</span>
<div class="b" style="left:615px;top:793px;width:120.55px;height:27.5px;background:#ebe9fb;border-radius:3px;"></div>
<span class="t" style="top:798.58px;font-size:18px;line-height:18px;color:#222;letter-spacing:-0.167px;left:622.00px;">Content Lead</span>
<span class="t" style="top:798.58px;font-size:18px;line-height:18px;color:#2f6db3;letter-spacing:0.170px;left:941.25px;text-decoration:underline;text-underline-offset:2.5px;text-decoration-thickness:1.2px;">+14808567360</span>
<span class="t" style="top:798.58px;font-size:18px;line-height:18px;color:#2f6db3;letter-spacing:0.130px;left:1080.00px;text-decoration:underline;text-underline-offset:2.5px;text-decoration-thickness:1.2px;">emilia@email.com</span>
<span class="t" style="top:798.58px;font-size:18px;line-height:18px;color:#222;letter-spacing:0.000px;left:1651.49px;">3</span>
<span class="t" style="top:798.58px;font-size:18px;line-height:18px;color:#222;letter-spacing:-0.163px;left:1678.30px;">Central Space Tech</span>
<span class="t" style="top:798.58px;font-size:18px;line-height:18px;color:#222;letter-spacing:-0.085px;left:1901.10px;">Content Designer</span>
<span class="t" style="top:798.58px;font-size:18px;line-height:18px;color:#222;letter-spacing:-0.122px;left:2135.70px;">August 18, 2022</span>
<span class="t" style="top:875.25px;font-size:18px;line-height:18px;color:#b5b5b5;letter-spacing:0.100px;left:48.94px;">9</span>
<span class="t" style="top:875.25px;font-size:18px;line-height:18px;color:#bdbdbd;letter-spacing:-0.079px;left:119.00px;">Type here to create a record</span>
<div class="b" style="left:111px;top:251px;width:243px;height:77.5px;background:#fff;border-right:3px solid #74b77a;border-bottom:3px solid #74b77a;border-bottom-right-radius:4.5px;"></div>
<span class="t" style="top:261.91px;font-size:18px;line-height:18px;color:#222;letter-spacing:-0.576px;left:119.00px;">Katy Roy</span>
<div class="b" style="left:316px;top:256.5px;width:27.6px;height:27.4px;background:#e4eaf7;border-radius:14px;"></div>
<svg class="b" style="left:323.5px;top:264.3px;" width="13.5" height="13.5" viewBox="0 0 13.5 13.5" fill="none"><g stroke="#3463b5" stroke-width="1.500" stroke-linecap="round"><path d="M8 5.500 L11.300 2.200"/><path d="M5.500 8 L2.200 11.300"/></g><path d="M7.800 1 H12.500 V5.700 Z" fill="#3463b5"/><path d="M5.700 12.500 H1 V7.800 Z" fill="#3463b5"/></svg>
<div class="b" style="left:5.7px;top:646.7px;width:3px;height:3px;background:#7a7a7a;border-radius:1.2px;"></div>
<div class="b" style="left:5.7px;top:653.9px;width:3px;height:3px;background:#7a7a7a;border-radius:1.2px;"></div>
<div class="b" style="left:5.7px;top:660.8px;width:3px;height:3px;background:#7a7a7a;border-radius:1.2px;"></div>
<div class="b" style="left:12.9px;top:646.7px;width:3px;height:3px;background:#7a7a7a;border-radius:1.2px;"></div>
<div class="b" style="left:12.9px;top:653.9px;width:3px;height:3px;background:#7a7a7a;border-radius:1.2px;"></div>
<div class="b" style="left:12.9px;top:660.8px;width:3px;height:3px;background:#7a7a7a;border-radius:1.2px;"></div>
<svg class="b" style="left:26.5px;top:652.4px;" width="12" height="7" viewBox="0 0 12 7" fill="none"><path d="M0.300 0.300 L11.700 0.300 L6 6 Z" fill="#a9a9a9"/></svg>
<div class="b" style="left:46.2px;top:646.9px;width:17.7px;height:17.7px;background:#fff;border-radius:3px;border:1.5px solid #cfcfcf;"></div>
<svg class="b" style="left:76px;top:647.5px;" width="15.5" height="15" viewBox="0 0 15.5 15" fill="none"><g stroke="#3b78d8" stroke-width="1.600" stroke-linecap="round"><path d="M9 6 L12.500 2.500"/><path d="M6.500 8.700 L3 12.200"/></g><path d="M8.800 0.700 H14.500 V6.400 Z" fill="#3b78d8"/><path d="M6.300 14.200 H0.700 V8.600 Z" fill="#3b78d8"/></svg>
<div class="b" style="left:7px;top:951.4px;width:109px;height:40px;background:#f3f3f3;border-radius:6px;border:1px solid #e9e9e9;"></div>
<div class="b" style="left:8px;top:952.4px;width:39px;height:38px;background:#f6f6f6;border-radius:5px;"></div>
<div class="b" style="left:47px;top:952px;width:1px;height:39px;background:#e9e9e9;"></div>
<svg class="b" style="left:19.3px;top:964px;" width="14" height="14" viewBox="0 0 14 14" fill="none"><path d="M7 0.300 V13.700 M0.300 7 H13.700" stroke="#5e5e5e" stroke-width="1.900"/></svg>
<span class="t" style="top:962.49px;font-size:17.5px;line-height:17.5px;color:#111;letter-spacing:0.000px;left:55.30px;">5</span>
<svg class="b" style="left:1279.7px;top:256.1px;border:0;box-shadow:0 0 0 1px #e8e8e8,0 1px 2px rgba(0,0,0,0.10);border-radius:2px;overflow:hidden;filter:blur(0.35px);" width="46.5" height="66" viewBox="0 0 47 66" preserveAspectRatio="none" fill="none"><rect width="47" height="66" fill="#fff"/><rect x="3" y="24" width="40" height="40" fill="#faf1e8"/><rect x="3" y="24" width="14" height="18" fill="#f6e6d8"/><rect x="3" y="43" width="14" height="21" fill="#f8e6ea"/><path d="M4 22 C5 12 7 7 11 7 C15 7 16 12 17 22 Z" fill="#1a1a1a"/><ellipse cx="11" cy="13.500" rx="2.300" ry="3.200" fill="#cdb3a8"/><rect x="20" y="8.500" width="9" height="1.300" fill="#333"/><rect x="20" y="11.300" width="15" height="1.500" fill="#222"/><rect x="20" y="14.500" width="5" height="0.800" fill="#777"/><rect x="20" y="18.500" width="21" height="1" fill="#bbb"/><rect x="5" y="27.0" width="8.0" height="0.7" fill="#555" opacity="0.7"/><rect x="5" y="29.0" width="6.4" height="0.7" fill="#555" opacity="0.7"/><rect x="5" y="31.0" width="7.6" height="0.7" fill="#555" opacity="0.7"/><rect x="6" y="33.0" width="8.0" height="0.7" fill="#b99" opacity="0.5"/><rect x="6" y="35.0" width="6.4" height="0.7" fill="#b99" opacity="0.5"/><rect x="6" y="37.0" width="7.6" height="0.7" fill="#b99" opacity="0.5"/><rect x="6" y="39.0" width="4.8" height="0.7" fill="#b99" opacity="0.5"/><rect x="5" y="46.0" width="8.0" height="0.7" fill="#555" opacity="0.6"/><rect x="5" y="48.0" width="6.4" height="0.7" fill="#555" opacity="0.6"/><rect x="6" y="51.0" width="7.0" height="0.7" fill="#c9a" opacity="0.5"/><rect x="6" y="53.0" width="5.6" height="0.7" fill="#c9a" opacity="0.5"/><rect x="6" y="55.0" width="6.6" height="0.7" fill="#c9a" opacity="0.5"/><rect x="6" y="57.0" width="4.2" height="0.7" fill="#c9a" opacity="0.5"/><rect x="6" y="59.0" width="6.3" height="0.7" fill="#c9a" opacity="0.5"/><rect x="6" y="61.0" width="4.9" height="0.7" fill="#c9a" opacity="0.5"/><rect x="20" y="27.0" width="8.0" height="0.7" fill="#666" opacity="0.6"/><rect x="20" y="29.0" width="6.4" height="0.7" fill="#666" opacity="0.6"/><rect x="27" y="31.0" width="13.0" height="0.7" fill="#a98" opacity="0.55"/><rect x="27" y="33.4" width="10.4" height="0.7" fill="#a98" opacity="0.55"/><rect x="27" y="35.8" width="12.3" height="0.7" fill="#a98" opacity="0.55"/><rect x="27" y="38.2" width="7.8" height="0.7" fill="#a98" opacity="0.55"/><rect x="27" y="40.6" width="11.7" height="0.7" fill="#a98" opacity="0.55"/><rect x="27" y="43.0" width="9.1" height="0.7" fill="#a98" opacity="0.55"/><rect x="27" y="45.4" width="13.0" height="0.7" fill="#a98" opacity="0.55"/><rect x="27" y="47.8" width="10.4" height="0.7" fill="#a98" opacity="0.55"/><rect x="20" y="54.0" width="5.0" height="0.7" fill="#444" opacity="0.8"/><rect x="20" y="58.0" width="20.0" height="0.7" fill="#555" opacity="0.7"/><rect x="20" y="59.8" width="16.0" height="0.7" fill="#555" opacity="0.7"/></svg>
<svg class="b" style="left:1279.7px;top:332.8px;border:0;box-shadow:0 0 0 1px #e8e8e8,0 1px 2px rgba(0,0,0,0.10);border-radius:2px;overflow:hidden;filter:blur(0.35px);" width="46.5" height="66" viewBox="0 0 47 66" preserveAspectRatio="none" fill="none"><rect width="47" height="66" fill="#fff"/><rect x="33" y="14" width="14" height="52" fill="#ececec"/><rect x="25" y="1" width="14" height="17" fill="#b9b9b9"/><path d="M27 18 C27 8 29 4 32.500 4 C36 4 38 8 38 18 Z" fill="#1d1d1d"/><ellipse cx="32.500" cy="10" rx="2.300" ry="3" fill="#d8b9a8"/><circle cx="43.500" cy="12.500" r="1" fill="#222"/><rect x="0" y="18" width="29" height="4.500" fill="#111"/><rect x="3" y="10.500" width="13" height="1.600" fill="#111"/><rect x="3" y="13.500" width="16" height="0.800" fill="#888"/><rect x="3" y="26.0" width="8.0" height="0.7" fill="#333" opacity="0.8"/><rect x="3" y="29.5" width="26.0" height="0.7" fill="#999" opacity="0.6"/><rect x="3" y="31.5" width="20.8" height="0.7" fill="#999" opacity="0.6"/><rect x="3" y="33.5" width="24.7" height="0.7" fill="#999" opacity="0.6"/><rect x="3" y="35.5" width="15.6" height="0.7" fill="#999" opacity="0.6"/><rect x="3" y="38.0" width="10.0" height="1" fill="#222" opacity="0.9"/><rect x="3" y="40.5" width="8.0" height="1" fill="#222" opacity="0.9"/><rect x="3" y="44.0" width="24.0" height="0.7" fill="#999" opacity="0.6"/><rect x="3" y="46.0" width="19.2" height="0.7" fill="#999" opacity="0.6"/><rect x="3" y="48.0" width="22.8" height="0.7" fill="#999" opacity="0.6"/><rect x="3" y="50.0" width="14.4" height="0.7" fill="#999" opacity="0.6"/><rect x="3" y="55.0" width="8.0" height="0.7" fill="#444" opacity="0.7"/><rect x="3" y="58.5" width="9.0" height="0.7" fill="#aaa" opacity="0.6"/><rect x="3" y="60.5" width="7.2" height="0.7" fill="#aaa" opacity="0.6"/><rect x="3" y="62.5" width="8.5" height="0.7" fill="#aaa" opacity="0.6"/><rect x="18" y="58.5" width="9.0" height="0.7" fill="#aaa" opacity="0.6"/><rect x="18" y="60.5" width="7.2" height="0.7" fill="#aaa" opacity="0.6"/><rect x="18" y="62.5" width="8.5" height="0.7" fill="#aaa" opacity="0.6"/><rect x="35" y="18.0" width="10.0" height="0.7" fill="#999" opacity="0.55"/><rect x="35" y="20.1" width="8.0" height="0.7" fill="#999" opacity="0.55"/><rect x="35" y="22.2" width="9.5" height="0.7" fill="#999" opacity="0.55"/><rect x="35" y="24.3" width="6.0" height="0.7" fill="#999" opacity="0.55"/><rect x="35" y="26.4" width="9.0" height="0.7" fill="#999" opacity="0.55"/><rect x="35" y="28.5" width="7.0" height="0.7" fill="#999" opacity="0.55"/><rect x="35" y="30.6" width="10.0" height="0.7" fill="#999" opacity="0.55"/><rect x="35" y="32.7" width="8.0" height="0.7" fill="#999" opacity="0.55"/><rect x="35" y="34.8" width="9.5" height="0.7" fill="#999" opacity="0.55"/><rect x="35" y="36.9" width="6.0" height="0.7" fill="#999" opacity="0.55"/><rect x="35" y="39.0" width="9.0" height="0.7" fill="#999" opacity="0.55"/><rect x="35" y="41.1" width="7.0" height="0.7" fill="#999" opacity="0.55"/><rect x="35" y="43.2" width="10.0" height="0.7" fill="#999" opacity="0.55"/><rect x="35" y="45.3" width="8.0" height="0.7" fill="#999" opacity="0.55"/><rect x="35" y="47.4" width="9.5" height="0.7" fill="#999" opacity="0.55"/><rect x="35" y="49.5" width="6.0" height="0.7" fill="#999" opacity="0.55"/><rect x="35" y="51.6" width="9.0" height="0.7" fill="#999" opacity="0.55"/><rect x="35" y="53.7" width="7.0" height="0.7" fill="#999" opacity="0.55"/><rect x="35" y="55.8" width="10.0" height="0.7" fill="#999" opacity="0.55"/><rect x="35" y="57.9" width="8.0" height="0.7" fill="#999" opacity="0.55"/><rect x="35" y="60.0" width="9.5" height="0.7" fill="#999" opacity="0.55"/><rect x="35" y="62.1" width="6.0" height="0.7" fill="#999" opacity="0.55"/></svg>
<svg class="b" style="left:1279.7px;top:409.5px;border:0;box-shadow:0 0 0 1px #e8e8e8,0 1px 2px rgba(0,0,0,0.10);border-radius:2px;overflow:hidden;filter:blur(0.35px);" width="46.5" height="66" viewBox="0 0 47 66" preserveAspectRatio="none" fill="none"><rect width="47" height="66" fill="#fff"/><rect x="0" y="0" width="17" height="66" fill="#3b3b3d"/><circle cx="8.500" cy="8.500" r="5.800" fill="#7c8794"/><circle cx="8.500" cy="7.500" r="2.300" fill="#c9b6aa"/><path d="M4.500 13 C5 10 12 10 12.500 13 Z" fill="#2b2b2b"/><rect x="3" y="19.0" width="11.0" height="0.7" fill="#ddd" opacity="0.55"/><rect x="3" y="21.0" width="8.8" height="0.7" fill="#ddd" opacity="0.55"/><rect x="3" y="23.0" width="10.4" height="0.7" fill="#ddd" opacity="0.55"/><rect x="3" y="27.0" width="11.0" height="0.7" fill="#ddd" opacity="0.5"/><rect x="3" y="29.0" width="8.8" height="0.7" fill="#ddd" opacity="0.5"/><rect x="3" y="31.0" width="10.4" height="0.7" fill="#ddd" opacity="0.5"/><rect x="3" y="35.0" width="7.0" height="0.7" fill="#fff" opacity="0.7"/><rect x="3" y="39.0" width="11.0" height="0.7" fill="#ccc" opacity="0.5"/><rect x="3" y="41.2" width="8.8" height="0.7" fill="#ccc" opacity="0.5"/><rect x="3" y="43.4" width="10.4" height="0.7" fill="#ccc" opacity="0.5"/><rect x="3" y="45.6" width="6.6" height="0.7" fill="#ccc" opacity="0.5"/><rect x="3" y="50.0" width="8.0" height="0.7" fill="#fff" opacity="0.7"/><rect x="3" y="54.0" width="11.0" height="0.7" fill="#ccc" opacity="0.45"/><rect x="3" y="56.0" width="8.8" height="0.7" fill="#ccc" opacity="0.45"/><rect x="3" y="58.0" width="10.4" height="0.7" fill="#ccc" opacity="0.45"/><rect x="3" y="60.0" width="6.6" height="0.7" fill="#ccc" opacity="0.45"/><rect x="20" y="6.500" width="15" height="1.700" fill="#111"/><rect x="20" y="9.500" width="11" height="1.500" fill="#222"/><rect x="20" y="14.0" width="7.0" height="0.7" fill="#555" opacity="0.7"/><rect x="20" y="18.0" width="6.0" height="0.7" fill="#666" opacity="0.6"/><rect x="20" y="23.5" width="4.8" height="0.7" fill="#666" opacity="0.6"/><rect x="20" y="29.0" width="5.7" height="0.7" fill="#666" opacity="0.6"/><rect x="29" y="18.0" width="15.0" height="0.7" fill="#888" opacity="0.6"/><rect x="29" y="20.0" width="12.0" height="0.7" fill="#888" opacity="0.6"/><rect x="29" y="22.0" width="14.2" height="0.7" fill="#888" opacity="0.6"/><rect x="29" y="24.0" width="9.0" height="0.7" fill="#888" opacity="0.6"/><rect x="29" y="26.0" width="13.5" height="0.7" fill="#888" opacity="0.6"/><rect x="29" y="28.0" width="10.5" height="0.7" fill="#888" opacity="0.6"/><rect x="29" y="30.0" width="15.0" height="0.7" fill="#888" opacity="0.6"/><rect x="29" y="32.0" width="12.0" height="0.7" fill="#888" opacity="0.6"/><rect x="20" y="36.0" width="7.0" height="0.7" fill="#444" opacity="0.8"/><rect x="20" y="40.0" width="6.0" height="0.7" fill="#666" opacity="0.6"/><rect x="20" y="45.2" width="4.8" height="0.7" fill="#666" opacity="0.6"/><rect x="20" y="50.4" width="5.7" height="0.7" fill="#666" opacity="0.6"/><rect x="20" y="55.6" width="3.6" height="0.7" fill="#666" opacity="0.6"/><rect x="29" y="40.0" width="15.0" height="0.7" fill="#999" opacity="0.55"/><rect x="29" y="42.0" width="12.0" height="0.7" fill="#999" opacity="0.55"/><rect x="29" y="44.0" width="14.2" height="0.7" fill="#999" opacity="0.55"/><rect x="29" y="46.0" width="9.0" height="0.7" fill="#999" opacity="0.55"/><rect x="29" y="48.0" width="13.5" height="0.7" fill="#999" opacity="0.55"/><rect x="29" y="50.0" width="10.5" height="0.7" fill="#999" opacity="0.55"/><rect x="29" y="52.0" width="15.0" height="0.7" fill="#999" opacity="0.55"/><rect x="29" y="54.0" width="12.0" height="0.7" fill="#999" opacity="0.55"/><rect x="29" y="56.0" width="14.2" height="0.7" fill="#999" opacity="0.55"/><rect x="20" y="60.0" width="24.0" height="0.7" fill="#aaa" opacity="0.5"/><rect x="20" y="62.0" width="19.2" height="0.7" fill="#aaa" opacity="0.5"/></svg>
<svg class="b" style="left:1279.7px;top:486.2px;border:0;box-shadow:0 0 0 1px #e8e8e8,0 1px 2px rgba(0,0,0,0.10);border-radius:2px;overflow:hidden;filter:blur(0.35px);" width="46.5" height="66" viewBox="0 0 47 66" preserveAspectRatio="none" fill="none"><rect width="47" height="66" fill="#fff"/><rect x="0" y="0" width="17" height="66" fill="#f0f0f0"/><rect x="17" y="0" width="30" height="4" fill="#e9e9e9"/><circle cx="9" cy="12.500" r="6.800" fill="#fff" stroke="#bbb" stroke-width="0.800"/><circle cx="9" cy="11.500" r="3" fill="#c98f6c"/><path d="M3.800 17 C4.500 14 13.500 14 14.200 17 Z" fill="#8a8f96"/><rect x="3.500" y="22" width="8" height="1.600" fill="#222"/><rect x="3.500" y="25" width="10" height="1.600" fill="#333"/><rect x="3.5" y="31.0" width="7.0" height="0.7" fill="#555" opacity="0.8"/><rect x="3.5" y="36.0" width="6.0" height="0.7" fill="#333" opacity="0.8"/><rect x="3.5" y="39.5" width="10.0" height="0.7" fill="#888" opacity="0.6"/><rect x="3.5" y="41.5" width="8.0" height="0.7" fill="#888" opacity="0.6"/><rect x="3.5" y="43.5" width="9.5" height="0.7" fill="#888" opacity="0.6"/><rect x="3.5" y="45.5" width="6.0" height="0.7" fill="#888" opacity="0.6"/><rect x="3.5" y="47.5" width="9.0" height="0.7" fill="#888" opacity="0.6"/><rect x="3.5" y="49.5" width="7.0" height="0.7" fill="#888" opacity="0.6"/><rect x="3.5" y="54.0" width="6.0" height="0.7" fill="#333" opacity="0.8"/><rect x="3.5" y="57.5" width="10.0" height="0.7" fill="#999" opacity="0.6"/><rect x="3.5" y="59.5" width="8.0" height="0.7" fill="#999" opacity="0.6"/><rect x="3.5" y="61.5" width="9.5" height="0.7" fill="#999" opacity="0.6"/><rect x="19" y="7.5" width="5.0" height="1" fill="#222" opacity="0.9"/><rect x="26" y="7.0" width="18.0" height="0.7" fill="#666" opacity="0.7"/><rect x="26" y="8.9" width="14.4" height="0.7" fill="#666" opacity="0.7"/><rect x="26" y="10.8" width="17.1" height="0.7" fill="#666" opacity="0.7"/><rect x="19" y="15.0" width="5.0" height="1" fill="#222" opacity="0.9"/><rect x="19" y="18.0" width="25.0" height="0.7" fill="#888" opacity="0.65"/><rect x="19" y="20.0" width="20.0" height="0.7" fill="#888" opacity="0.65"/><rect x="19" y="22.0" width="23.8" height="0.7" fill="#888" opacity="0.65"/><rect x="19" y="24.0" width="15.0" height="0.7" fill="#888" opacity="0.65"/><rect x="19" y="26.0" width="22.5" height="0.7" fill="#888" opacity="0.65"/><rect x="19" y="28.0" width="17.5" height="0.7" fill="#888" opacity="0.65"/><rect x="19" y="32.0" width="5.0" height="1" fill="#222" opacity="0.9"/><rect x="19" y="35.0" width="25.0" height="0.7" fill="#888" opacity="0.65"/><rect x="19" y="37.0" width="20.0" height="0.7" fill="#888" opacity="0.65"/><rect x="19" y="39.0" width="23.8" height="0.7" fill="#888" opacity="0.65"/><rect x="19" y="41.0" width="15.0" height="0.7" fill="#888" opacity="0.65"/><rect x="19" y="43.0" width="22.5" height="0.7" fill="#888" opacity="0.65"/><rect x="19" y="45.0" width="17.5" height="0.7" fill="#888" opacity="0.65"/><rect x="19" y="49.0" width="5.0" height="1" fill="#222" opacity="0.9"/><rect x="19" y="52.0" width="25.0" height="0.7" fill="#888" opacity="0.6"/><rect x="19" y="54.0" width="20.0" height="0.7" fill="#888" opacity="0.6"/><rect x="19" y="56.0" width="23.8" height="0.7" fill="#888" opacity="0.6"/><rect x="34" y="57" width="9" height="3" fill="#999" opacity="0.600"/><rect x="19" y="58.0" width="11.0" height="0.7" fill="#888" opacity="0.6"/><rect x="19" y="60.0" width="8.8" height="0.7" fill="#888" opacity="0.6"/></svg>
<svg class="b" style="left:1279.7px;top:562.8px;border:0;box-shadow:0 0 0 1px #e8e8e8,0 1px 2px rgba(0,0,0,0.10);border-radius:2px;overflow:hidden;filter:blur(0.35px);" width="46.5" height="66" viewBox="0 0 47 66" preserveAspectRatio="none" fill="none"><rect width="47" height="66" fill="#fff"/><rect x="0" y="0" width="17" height="66" fill="#1b2740"/><rect x="17" y="0" width="30" height="18" fill="#2d5bb8"/><circle cx="8.500" cy="8" r="5.500" fill="#f3f3f3"/><circle cx="8.500" cy="7" r="2.200" fill="#c9a38c"/><path d="M4.800 12 C5.500 9.500 11.500 9.500 12.200 12 Z" fill="#6a7482"/><rect x="21" y="8" width="16" height="1.600" fill="#fff" opacity="0.900"/><rect x="21" y="11" width="11" height="1" fill="#dfe7f8" opacity="0.800"/><rect x="3" y="17.0" width="11.0" height="0.7" fill="#7f95c4" opacity="0.7"/><rect x="3" y="19.2" width="8.8" height="0.7" fill="#7f95c4" opacity="0.7"/><rect x="3" y="21.4" width="10.4" height="0.7" fill="#7f95c4" opacity="0.7"/><rect x="3" y="26.0" width="11.0" height="0.7" fill="#8fa3cc" opacity="0.55"/><rect x="3" y="28.2" width="8.8" height="0.7" fill="#8fa3cc" opacity="0.55"/><rect x="3" y="30.4" width="10.4" height="0.7" fill="#8fa3cc" opacity="0.55"/><rect x="3" y="32.6" width="6.6" height="0.7" fill="#8fa3cc" opacity="0.55"/><rect x="3" y="37.0" width="6.0" height="0.7" fill="#fff" opacity="0.7"/><rect x="6" y="40.5" width="9.0" height="0.7" fill="#7fa0dd" opacity="0.7"/><rect x="6" y="42.7" width="7.2" height="0.7" fill="#7fa0dd" opacity="0.7"/><rect x="6" y="44.9" width="8.5" height="0.7" fill="#7fa0dd" opacity="0.7"/><rect x="6" y="47.1" width="5.4" height="0.7" fill="#7fa0dd" opacity="0.7"/><rect x="3" y="52.0" width="6.0" height="0.7" fill="#fff" opacity="0.7"/><rect x="6" y="55.5" width="9.0" height="0.7" fill="#7fa0dd" opacity="0.7"/><rect x="6" y="57.7" width="7.2" height="0.7" fill="#7fa0dd" opacity="0.7"/><rect x="20" y="21.0" width="5.0" height="0.9" fill="#222" opacity="0.8"/><rect x="20" y="24.0" width="24.0" height="0.7" fill="#999" opacity="0.6"/><rect x="20" y="26.0" width="19.2" height="0.7" fill="#999" opacity="0.6"/><rect x="20" y="30.0" width="8.0" height="0.7" fill="#333" opacity="0.8"/><rect x="20" y="32.0" width="6.4" height="0.7" fill="#333" opacity="0.8"/><rect x="20" y="34.5" width="24.0" height="0.7" fill="#999" opacity="0.6"/><rect x="20" y="36.5" width="19.2" height="0.7" fill="#999" opacity="0.6"/><rect x="20" y="40.0" width="7.0" height="0.7" fill="#333" opacity="0.8"/><rect x="20" y="43.0" width="24.0" height="0.7" fill="#999" opacity="0.6"/><rect x="20" y="45.0" width="19.2" height="0.7" fill="#999" opacity="0.6"/><rect x="20" y="47.0" width="22.8" height="0.7" fill="#999" opacity="0.6"/><rect x="20" y="51.0" width="7.0" height="0.7" fill="#333" opacity="0.8"/><rect x="20" y="54.0" width="24.0" height="0.7" fill="#999" opacity="0.6"/><rect x="20" y="56.0" width="19.2" height="0.7" fill="#999" opacity="0.6"/><rect x="20" y="59.5" width="7.0" height="0.7" fill="#333" opacity="0.8"/><rect x="20" y="62.0" width="22.0" height="0.7" fill="#999" opacity="0.6"/></svg>
<svg class="b" style="left:1279.7px;top:639.5px;border:0;box-shadow:0 0 0 1px #e8e8e8,0 1px 2px rgba(0,0,0,0.10);border-radius:2px;overflow:hidden;filter:blur(0.35px);" width="46.5" height="66" viewBox="0 0 47 66" preserveAspectRatio="none" fill="none"><rect width="47" height="66" fill="#fff"/><rect x="0" y="2" width="47" height="12.500" fill="#6fb8bc"/><rect x="0" y="14.500" width="17" height="51.500" fill="#f3f7f8"/><circle cx="8.500" cy="9" r="6.800" fill="#e8eef0" stroke="#fff" stroke-width="0.800"/><circle cx="8.500" cy="7.800" r="2.700" fill="#b98d74"/><path d="M3.500 14 C4.500 10.800 12.500 10.800 13.500 14 Z" fill="#4e7f8f"/><rect x="19" y="6" width="15" height="1.600" fill="#fff" opacity="0.950"/><rect x="19" y="9" width="9" height="1" fill="#fff" opacity="0.800"/><rect x="0" y="64.800" width="47" height="1.200" fill="#6fb8bc"/><rect x="3" y="20.0" width="10.0" height="0.7" fill="#9bb" opacity="0.6"/><rect x="3" y="22.3" width="8.0" height="0.7" fill="#9bb" opacity="0.6"/><rect x="3" y="24.6" width="9.5" height="0.7" fill="#9bb" opacity="0.6"/><rect x="3" y="26.9" width="6.0" height="0.7" fill="#9bb" opacity="0.6"/><rect x="3" y="29.2" width="9.0" height="0.7" fill="#9bb" opacity="0.6"/><rect x="2" y="34.500" width="8" height="1.500" fill="#5aa9ae"/><rect x="3" y="38.0" width="11.0" height="0.7" fill="#9bb" opacity="0.55"/><rect x="3" y="40.3" width="8.8" height="0.7" fill="#9bb" opacity="0.55"/><rect x="3" y="42.6" width="10.4" height="0.7" fill="#9bb" opacity="0.55"/><rect x="2" y="46.500" width="6" height="1.500" fill="#5aa9ae"/><rect x="2" y="50.0" width="12.0" height="0.7" fill="#7bb" opacity="0.5"/><rect x="2" y="52.2" width="9.6" height="0.7" fill="#7bb" opacity="0.5"/><rect x="2" y="54.4" width="11.4" height="0.7" fill="#7bb" opacity="0.5"/><rect x="2" y="56.6" width="7.2" height="0.7" fill="#7bb" opacity="0.5"/><rect x="2" y="58.8" width="10.8" height="0.7" fill="#7bb" opacity="0.5"/><rect x="2" y="61.0" width="8.4" height="0.7" fill="#7bb" opacity="0.5"/><path d="M6 49 V63 M10 49 V63" stroke="#8cc" stroke-width="0.400"/><rect x="19" y="17.500" width="6" height="1.500" fill="#5aa9ae"/><rect x="19" y="21.0" width="25.0" height="0.7" fill="#999" opacity="0.5"/><rect x="19" y="25" width="7" height="1.500" fill="#5aa9ae"/><rect x="25" y="28.5" width="19.0" height="0.7" fill="#9aa" opacity="0.6"/><rect x="25" y="30.6" width="15.2" height="0.7" fill="#9aa" opacity="0.6"/><rect x="25" y="32.7" width="18.1" height="0.7" fill="#9aa" opacity="0.6"/><rect x="25" y="34.8" width="11.4" height="0.7" fill="#9aa" opacity="0.6"/><rect x="19" y="38" width="6" height="1.500" fill="#5aa9ae"/><rect x="25" y="41.5" width="19.0" height="0.7" fill="#9aa" opacity="0.6"/><rect x="25" y="43.6" width="15.2" height="0.7" fill="#9aa" opacity="0.6"/><rect x="21" y="47" width="5" height="3.500" fill="none" stroke="#9cc" stroke-width="0.400"/><rect x="29" y="47" width="5" height="3.500" fill="none" stroke="#9cc" stroke-width="0.400"/><rect x="37" y="47" width="5" height="3.500" fill="none" stroke="#9cc" stroke-width="0.400"/><rect x="19" y="53.500" width="9" height="1.500" fill="#5aa9ae"/><rect x="25" y="57.0" width="19.0" height="0.7" fill="#9aa" opacity="0.6"/><rect x="25" y="59.1" width="15.2" height="0.7" fill="#9aa" opacity="0.6"/><rect x="25" y="61.2" width="18.1" height="0.7" fill="#9aa" opacity="0.6"/></svg>
<svg class="b" style="left:1279.7px;top:716.2px;border:0;box-shadow:0 0 0 1px #e8e8e8,0 1px 2px rgba(0,0,0,0.10);border-radius:2px;overflow:hidden;filter:blur(0.35px);" width="46.5" height="66" viewBox="0 0 47 66" preserveAspectRatio="none" fill="none"><rect width="47" height="66" fill="#fff"/><rect x="29" y="0" width="18" height="66" fill="#29292b"/><rect x="17" y="8.500" width="30" height="6.500" fill="#f29b30"/><circle cx="10.500" cy="10.500" r="8.300" fill="#3a2a1c"/><circle cx="10.500" cy="10.500" r="8.300" fill="none" stroke="#f29b30" stroke-width="1.300"/><ellipse cx="10.500" cy="10.500" rx="3.200" ry="4.500" fill="#d9a06a"/><path d="M7.300 10 C7.300 4 13.700 4 13.700 10 C13 7 8 7 7.300 10 Z" fill="#e8c59a"/><path d="M8 13.500 C9 17.500 12 17.500 13 13.500 Z" fill="#b06d2c"/><rect x="21" y="10" width="9" height="1.500" fill="#fff" opacity="0.900"/><rect x="21" y="12.700" width="14" height="0.900" fill="#fff" opacity="0.700"/><rect x="0" y="21" width="25" height="2" fill="#f29b30"/><rect x="0" y="41" width="25" height="2" fill="#f29b30"/><rect x="0" y="62" width="29" height="4" fill="#f29b30"/><circle cx="3.500" cy="27" r="0.900" fill="#f2b23a"/><circle cx="3.500" cy="30" r="0.900" fill="#f2b23a"/><circle cx="3.500" cy="33" r="0.900" fill="#f2b23a"/><circle cx="3.500" cy="36" r="0.900" fill="#f2b23a"/><circle cx="3.500" cy="47" r="0.900" fill="#f2b23a"/><circle cx="3.500" cy="51.5" r="0.900" fill="#f2b23a"/><circle cx="3.500" cy="56" r="0.900" fill="#f2b23a"/><circle cx="3.500" cy="59.5" r="0.900" fill="#f2b23a"/><rect x="6" y="26.5" width="5.0" height="0.9" fill="#444" opacity="0.8"/><rect x="6" y="29.5" width="4.0" height="0.9" fill="#444" opacity="0.8"/><rect x="6" y="32.5" width="4.8" height="0.9" fill="#444" opacity="0.8"/><rect x="6" y="35.5" width="3.0" height="0.9" fill="#444" opacity="0.8"/><rect x="13" y="26.5" width="11.0" height="0.7" fill="#888" opacity="0.65"/><rect x="13" y="28.3" width="8.8" height="0.7" fill="#888" opacity="0.65"/><rect x="13" y="30.1" width="10.4" height="0.7" fill="#888" opacity="0.65"/><rect x="13" y="31.9" width="6.6" height="0.7" fill="#888" opacity="0.65"/><rect x="13" y="33.7" width="9.9" height="0.7" fill="#888" opacity="0.65"/><rect x="13" y="35.5" width="7.7" height="0.7" fill="#888" opacity="0.65"/><rect x="13" y="37.3" width="11.0" height="0.7" fill="#888" opacity="0.65"/><rect x="6" y="46.5" width="5.0" height="0.9" fill="#444" opacity="0.8"/><rect x="6" y="50.8" width="4.0" height="0.9" fill="#444" opacity="0.8"/><rect x="6" y="55.1" width="4.8" height="0.9" fill="#444" opacity="0.8"/><rect x="6" y="59.4" width="3.0" height="0.9" fill="#444" opacity="0.8"/><rect x="13" y="46.0" width="11.0" height="0.7" fill="#888" opacity="0.65"/><rect x="13" y="47.9" width="8.8" height="0.7" fill="#888" opacity="0.65"/><rect x="13" y="49.8" width="10.4" height="0.7" fill="#888" opacity="0.65"/><rect x="13" y="51.7" width="6.6" height="0.7" fill="#888" opacity="0.65"/><rect x="13" y="53.6" width="9.9" height="0.7" fill="#888" opacity="0.65"/><rect x="13" y="55.5" width="7.7" height="0.7" fill="#888" opacity="0.65"/><rect x="13" y="57.4" width="11.0" height="0.7" fill="#888" opacity="0.65"/><rect x="13" y="59.3" width="8.8" height="0.7" fill="#888" opacity="0.65"/><rect x="32" y="18" width="12" height="2" fill="none" stroke="#f29b30" stroke-width="0.500"/><rect x="32" y="23.0" width="12.0" height="0.7" fill="#ddd" opacity="0.5"/><rect x="32" y="25.2" width="9.6" height="0.7" fill="#ddd" opacity="0.5"/><rect x="32" y="27.4" width="11.4" height="0.7" fill="#ddd" opacity="0.5"/><rect x="32" y="31" width="12" height="2" fill="none" stroke="#f29b30" stroke-width="0.500"/><rect x="32" y="36.0" width="12.0" height="0.7" fill="#f2b23a" opacity="0.7"/><rect x="32" y="38.2" width="9.6" height="0.7" fill="#f2b23a" opacity="0.7"/><rect x="32" y="40.4" width="11.4" height="0.7" fill="#f2b23a" opacity="0.7"/><rect x="32" y="44" width="12" height="2" fill="none" stroke="#f29b30" stroke-width="0.500"/><rect x="32" y="48.5" width="12.0" height="0.7" fill="#f2b23a" opacity="0.75"/><rect x="32" y="50.7" width="9.6" height="0.7" fill="#f2b23a" opacity="0.75"/><rect x="32" y="52.9" width="11.4" height="0.7" fill="#f2b23a" opacity="0.75"/><rect x="32" y="55.1" width="7.2" height="0.7" fill="#f2b23a" opacity="0.75"/><circle cx="34" cy="61.500" r="1.600" fill="#eee"/><circle cx="38" cy="61.500" r="1.600" fill="#eee"/><circle cx="42" cy="61.500" r="1.600" fill="#eee"/></svg>
<svg class="b" style="left:1279.7px;top:792.8px;border:0;box-shadow:0 0 0 1px #e8e8e8,0 1px 2px rgba(0,0,0,0.10);border-radius:2px;overflow:hidden;filter:blur(0.35px);" width="46.5" height="66" viewBox="0 0 47 66" preserveAspectRatio="none" fill="none"><rect width="47" height="66" fill="#fff"/><rect x="0" y="0" width="17" height="66" fill="#fafafa"/><rect x="3.500" y="1.500" width="11" height="18" fill="#f6dc4e"/><path d="M6.500 19.500 C6.500 11 7.500 8 9.200 8 C11 8 12 11 12 19.500 Z" fill="#4a4a55"/><circle cx="9.200" cy="6.800" r="1.700" fill="#d9b9a5"/><rect x="22" y="9.500" width="8" height="1.300" fill="#999"/><rect x="30.500" y="9.500" width="6" height="1.300" fill="#222"/><rect x="22" y="12.300" width="17" height="1.700" fill="#111"/><rect x="3.5" y="23.5" width="8.0" height="0.7" fill="#555" opacity="0.7"/><rect x="3.500" y="27" width="1.600" height="1.600" fill="#f3d94a"/><rect x="3.500" y="30" width="1.600" height="1.600" fill="#f3d94a"/><rect x="3.500" y="33" width="1.600" height="1.600" fill="#f3d94a"/><rect x="6" y="27.5" width="8.0" height="0.7" fill="#999" opacity="0.6"/><rect x="6" y="30.5" width="6.4" height="0.7" fill="#999" opacity="0.6"/><rect x="6" y="33.5" width="7.6" height="0.7" fill="#999" opacity="0.6"/><rect x="3.5" y="38.0" width="7.0" height="1" fill="#222" opacity="0.9"/><rect x="3.5" y="41.0" width="10.0" height="0.7" fill="#999" opacity="0.6"/><rect x="3.5" y="43.0" width="8.0" height="0.7" fill="#999" opacity="0.6"/><rect x="3.5" y="45.0" width="9.5" height="0.7" fill="#999" opacity="0.6"/><rect x="3.5" y="47.0" width="6.0" height="0.7" fill="#999" opacity="0.6"/><rect x="3.5" y="52.0" width="6.0" height="0.7" fill="#333" opacity="0.8"/><rect x="3.5" y="55.5" width="7.0" height="1.6" fill="#bbb" opacity="0.7"/><rect x="3.5" y="58.5" width="5.6" height="1.6" fill="#bbb" opacity="0.7"/><rect x="22" y="20.5" width="11.0" height="1" fill="#222" opacity="0.9"/><rect x="22" y="23.5" width="8.0" height="0.7" fill="#888" opacity="0.6"/><rect x="22" y="27" width="1" height="4.500" fill="#f3d94a"/><rect x="24.5" y="27.5" width="19.0" height="0.7" fill="#bbb" opacity="0.6"/><rect x="24.5" y="29.4" width="15.2" height="0.7" fill="#bbb" opacity="0.6"/><rect x="24.5" y="31.3" width="18.1" height="0.7" fill="#bbb" opacity="0.6"/><rect x="22" y="35.0" width="6.0" height="0.7" fill="#666" opacity="0.6"/><rect x="22" y="38" width="1" height="4.500" fill="#f3d94a"/><rect x="24.5" y="38.5" width="19.0" height="0.7" fill="#bbb" opacity="0.6"/><rect x="24.5" y="40.4" width="15.2" height="0.7" fill="#bbb" opacity="0.6"/><rect x="24.5" y="42.3" width="18.1" height="0.7" fill="#bbb" opacity="0.6"/><rect x="22" y="47.0" width="5.0" height="0.7" fill="#444" opacity="0.8"/><rect x="22" y="50" width="6" height="4" fill="#faf0b0"/><rect x="33" y="50" width="6" height="4" fill="#faf0b0"/><rect x="41" y="50" width="3" height="4" fill="#faf0b0"/><rect x="22" y="58.0" width="5.0" height="0.7" fill="#444" opacity="0.8"/><rect x="22" y="61.0" width="12.0" height="0.7" fill="#999" opacity="0.6"/></svg>
</div></body></html>
